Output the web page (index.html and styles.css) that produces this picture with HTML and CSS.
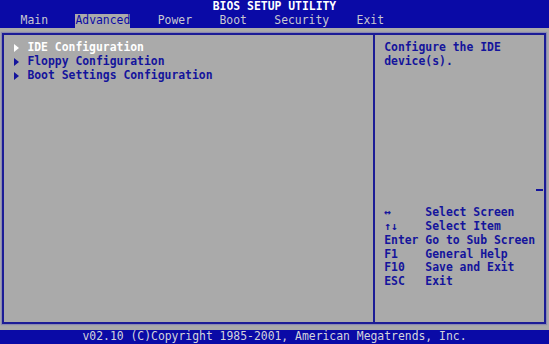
FILE: index.html
```html
<!DOCTYPE html>
<html lang="en">
<head>
  <meta charset="UTF-8">
  <meta name="viewport" content="width=device-width, initial-scale=1.0">
  <title>BIOS Setup Utility</title>
  <link rel="stylesheet" href="styles.css">
</head>
<body>
  <div class="screen">
    <header class="top">
      <div class="title">BIOS SETUP UTILITY</div>
      <nav class="tabs">
        <span class="tab">Main</span>
        <span class="tab active">Advanced</span>
        <span class="tab">Power</span>
        <span class="tab">Boot</span>
        <span class="tab">Security</span>
        <span class="tab">Exit</span>
      </nav>
    </header>

    <main class="body">
      <div class="frame">
        <section class="menu-panel">
          <ul class="items">
            <li class="item selected"><i class="arrow"></i>IDE Configuration</li>
            <li class="item"><i class="arrow"></i>Floppy Configuration</li>
            <li class="item"><i class="arrow"></i>Boot Settings Configuration</li>
          </ul>
        </section>
        <aside class="help-panel">
          <p class="desc">Configure the IDE<br>device(s).</p>
          <div class="scroll"><span class="scroll-mark"></span></div>
          <dl class="keys">
            <div class="key-row"><dt>&#8596;</dt><dd>Select Screen</dd></div>
            <div class="key-row"><dt>&#8593;&#8595;</dt><dd>Select Item</dd></div>
            <div class="key-row"><dt>Enter</dt><dd>Go to Sub Screen</dd></div>
            <div class="key-row"><dt>F1</dt><dd>General Help</dd></div>
            <div class="key-row"><dt>F10</dt><dd>Save and Exit</dd></div>
            <div class="key-row"><dt>ESC</dt><dd>Exit</dd></div>
          </dl>
        </aside>
      </div>
    </main>

    <footer class="footer">v02.10 (C)Copyright 1985-2001, American Megatrends, Inc.</footer>
  </div>
</body>
</html>
```

FILE: styles.css
```css
:root {
  --row: 13.76px;
  --blue: #0a0aa6;
  --grey: #aaaaaa;
  --ink: #14149c;
}
* {
  box-sizing: border-box;
}
html, body {
  margin: 0;
  padding: 0;
  background: var(--grey);
}
.screen {
  width: 549px;
  height: 344px;
  display: flex;
  flex-direction: column;
  font-family: "DejaVu Sans Mono", "Liberation Mono", monospace;
  font-weight: bold;
  font-size: 11.4px;
  line-height: var(--row);
  white-space: nowrap;
}
.top {
  background: var(--blue);
}
.title {
  height: var(--row);
  text-align: center;
  color: #ffffff;
}
.tabs {
  height: var(--row);
  display: flex;
  gap: 4ch;
  padding-left: 3ch;
  color: #c8c8d0;
  font-weight: normal;
}
.tab.active {
  background: var(--grey);
  color: var(--blue);
}
.body {
  flex: 1;
  display: flex;
  padding: 5.9px 2.6px 5.8px 2.4px;
}
.frame {
  flex: 1;
  display: flex;
  border: 2px solid #1c1c96;
  box-shadow: 0 0 1px 1px rgba(80, 80, 190, 0.35);
}
.menu-panel {
  width: 368.5px;
  flex-shrink: 0;
  padding: 5.9px 0 0 9.3px;
}
.items {
  list-style: none;
  margin: 0;
  padding: 0;
}
.item {
  display: flex;
  align-items: center;
  height: var(--row);
  color: var(--ink);
}
.item.selected {
  color: #ffffff;
}
.arrow {
  width: 2ch;
  height: 8px;
  display: block;
  position: relative;
}
.arrow::before {
  content: "";
  position: absolute;
  left: 0;
  top: 0;
  border-left: 5px solid currentColor;
  border-top: 4px solid transparent;
  border-bottom: 4px solid transparent;
}
.help-panel {
  flex: 1;
  border-left: 2px solid #1c1c96;
  padding: 5.9px 0 0 9.3px;
  color: var(--ink);
}
.desc {
  margin: 0;
  height: calc(var(--row) * 2);
}
.scroll {
  height: calc(var(--row) * 10);
  position: relative;
}
.scroll-mark {
  position: absolute;
  right: 1px;
  top: calc(var(--row) * 8 + 10px);
  width: 7px;
  height: 2px;
  background: var(--ink);
}
.keys {
  margin: 0;
}
.key-row {
  display: flex;
  height: var(--row);
}
.key-row dt {
  width: 6ch;
}
.key-row dd {
  margin: 0;
}
.footer {
  height: var(--row);
  background: var(--blue);
  color: #d4d4dc;
  text-align: center;
  font-weight: normal;
}
```
